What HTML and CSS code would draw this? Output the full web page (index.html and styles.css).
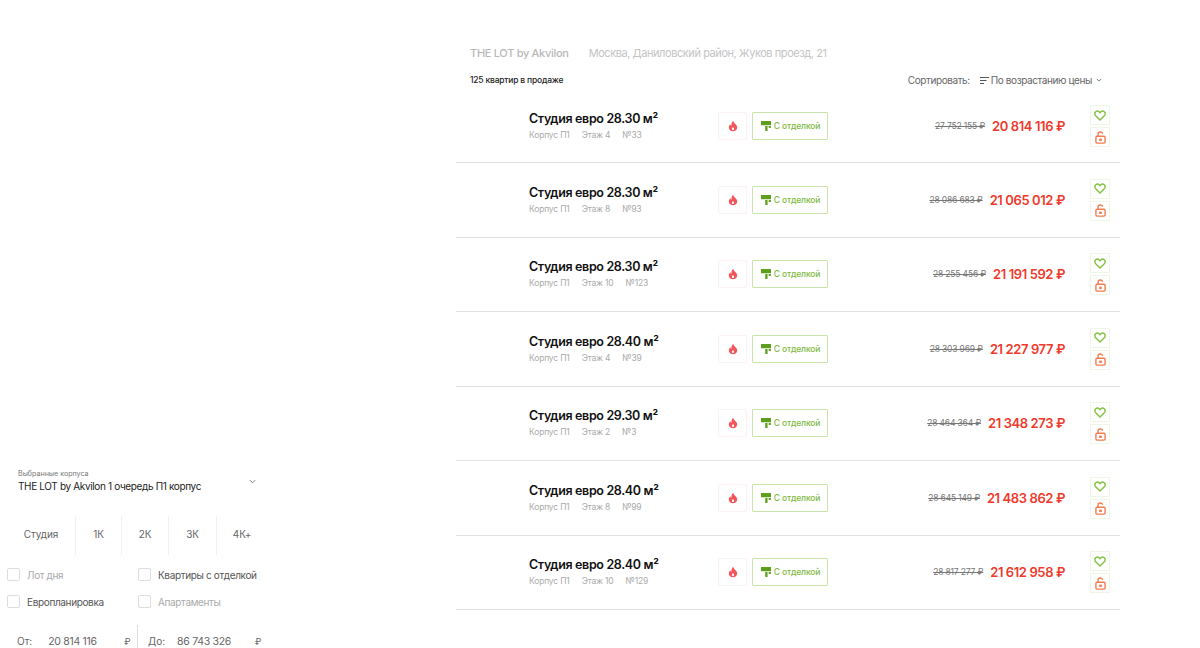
FILE: index.html
```html
<!DOCTYPE html>
<html lang="ru">
<head>
<meta charset="utf-8">
<title>THE LOT by Akvilon</title>
<link rel="stylesheet" href="styles.css">
</head>
<body>
<svg class="defs" width="0" height="0" aria-hidden="true">
  <symbol id="fire" viewBox="0 0 12 14"><path fill="#f4555a" fill-rule="evenodd" d="M6.3.6c.5 2.200 1.500 3 2.700 4.300C10.300 6.200 11 7.300 11 8.800 11 11.500 8.800 13.400 6 13.400S1 11.500 1 8.800c0-1.600.8-3 1.900-3.900.1 1 .5 1.700 1.200 2.100C3.900 4.400 4.600 2 6.300.6zM6 8.200c-.8.9-1.300 1.600-1.300 2.500 0 .8.600 1.300 1.300 1.300s1.300-.5 1.300-1.300C7.300 9.800 6.800 9.100 6 8.200z"/></symbol>
  <symbol id="roller" viewBox="0 0 13 13"><path fill="#5f9e1c" d="M0 0h13v5.500H0zM5.500 6.500h3V13h-3zM10 6.500h2.800v2.600H10z"/></symbol>
  <symbol id="heart" viewBox="0 0 14 13"><path fill="none" stroke="#83c341" stroke-width="1.700" stroke-linejoin="round" d="M7 11.800 1.900 6.700C.5 5.300.6 3.200 1.900 2c1.300-1.100 3.200-.9 4.300.3l.8.900.8-.9c1.100-1.200 3-1.400 4.300-.3 1.300 1.200 1.400 3.300 0 4.700z"/></symbol>
  <symbol id="lock" viewBox="0 0 12 14"><g fill="none" stroke="#f37b4d" stroke-width="1.500"><rect x="1" y="5.700" width="10" height="7.500" rx="1.200"/><path d="M3.300 5.700V3.300C3.300 1.900 4.500 1 5.800 1 7 1 8 1.700 8.400 2.800"/></g><rect fill="#f37b4d" x="4.600" y="8.200" width="2.800" height="2.600"/></symbol>
  <symbol id="chev" viewBox="0 0 8 5"><path fill="none" stroke="currentColor" stroke-width="1.100" d="M1 1l3 3 3-3"/></symbol>
</svg>
<main class="page">
  <aside class="filters">
    <div class="building">
      <div>
        <div class="building-label">Выбранные корпуса</div>
        <div class="building-value">THE LOT by Akvilon 1 очередь П1 корпус</div>
      </div>
      <svg class="building-chev"><use href="#chev"/></svg>
    </div>
    <div class="types">
      <div class="type type-studio">Студия</div>
      <div class="type type-1">1К</div>
      <div class="type type-2">2К</div>
      <div class="type type-3">3К</div>
      <div class="type type-4">4К+</div>
    </div>
    <div class="checks">
      <label class="check muted"><span class="box"></span>Лот дня</label>
      <label class="check"><span class="box"></span>Квартиры с отделкой</label>
      <label class="check"><span class="box"></span>Европланировка</label>
      <label class="check muted"><span class="box"></span>Апартаменты</label>
    </div>
    <div class="range">
      <div class="range-side range-from"><span>От:</span><span class="range-num">20 814 116</span><span class="range-cur">₽</span></div>
      <div class="range-side range-to"><span>До:</span><span class="range-num">86 743 326</span><span class="range-cur">₽</span></div>
    </div>
  </aside>
  <section class="list">
    <header class="heading">
      <span class="title">THE LOT by Akvilon</span>
      <span class="address">Москва, Даниловский район, Жуков проезд, 21</span>
    </header>
    <div class="toolbar">
      <span class="count">125 квартир в продаже</span>
      <div class="sort">
        <span>Сортировать:</span>
        <span class="sort-value">
          <svg class="sort-icon" viewBox="0 0 9 7"><path stroke="#555" stroke-width="1" d="M0 .5h9M0 3.500h6.500M0 6.500h4"/></svg>
          По возрастанию цены
          <svg class="sort-chev"><use href="#chev"/></svg>
        </span>
      </div>
    </div>
    <article class="row">
      <div class="info"><h3>Студия евро 28.30 м²</h3><p><span>Корпус П1</span><span>Этаж 4</span><span>№33</span></p></div>
      <div class="tag-fire"><svg class="i-fire"><use href="#fire"/></svg></div>
      <div class="tag-finish"><svg class="i-roller"><use href="#roller"/></svg>С отделкой</div>
      <div class="prices"><s>27 752 155 ₽</s><strong>20 814 116 ₽</strong></div>
      <div class="actions"><span class="act"><svg class="i-heart"><use href="#heart"/></svg></span><span class="act"><svg class="i-lock"><use href="#lock"/></svg></span></div>
    </article>
    <article class="row">
      <div class="info"><h3>Студия евро 28.30 м²</h3><p><span>Корпус П1</span><span>Этаж 8</span><span>№93</span></p></div>
      <div class="tag-fire"><svg class="i-fire"><use href="#fire"/></svg></div>
      <div class="tag-finish"><svg class="i-roller"><use href="#roller"/></svg>С отделкой</div>
      <div class="prices"><s>28 086 683 ₽</s><strong>21 065 012 ₽</strong></div>
      <div class="actions"><span class="act"><svg class="i-heart"><use href="#heart"/></svg></span><span class="act"><svg class="i-lock"><use href="#lock"/></svg></span></div>
    </article>
    <article class="row">
      <div class="info"><h3>Студия евро 28.30 м²</h3><p><span>Корпус П1</span><span>Этаж 10</span><span>№123</span></p></div>
      <div class="tag-fire"><svg class="i-fire"><use href="#fire"/></svg></div>
      <div class="tag-finish"><svg class="i-roller"><use href="#roller"/></svg>С отделкой</div>
      <div class="prices"><s>28 255 456 ₽</s><strong>21 191 592 ₽</strong></div>
      <div class="actions"><span class="act"><svg class="i-heart"><use href="#heart"/></svg></span><span class="act"><svg class="i-lock"><use href="#lock"/></svg></span></div>
    </article>
    <article class="row">
      <div class="info"><h3>Студия евро 28.40 м²</h3><p><span>Корпус П1</span><span>Этаж 4</span><span>№39</span></p></div>
      <div class="tag-fire"><svg class="i-fire"><use href="#fire"/></svg></div>
      <div class="tag-finish"><svg class="i-roller"><use href="#roller"/></svg>С отделкой</div>
      <div class="prices"><s>28 303 969 ₽</s><strong>21 227 977 ₽</strong></div>
      <div class="actions"><span class="act"><svg class="i-heart"><use href="#heart"/></svg></span><span class="act"><svg class="i-lock"><use href="#lock"/></svg></span></div>
    </article>
    <article class="row">
      <div class="info"><h3>Студия евро 29.30 м²</h3><p><span>Корпус П1</span><span>Этаж 2</span><span>№3</span></p></div>
      <div class="tag-fire"><svg class="i-fire"><use href="#fire"/></svg></div>
      <div class="tag-finish"><svg class="i-roller"><use href="#roller"/></svg>С отделкой</div>
      <div class="prices"><s>28 464 364 ₽</s><strong>21 348 273 ₽</strong></div>
      <div class="actions"><span class="act"><svg class="i-heart"><use href="#heart"/></svg></span><span class="act"><svg class="i-lock"><use href="#lock"/></svg></span></div>
    </article>
    <article class="row">
      <div class="info"><h3>Студия евро 28.40 м²</h3><p><span>Корпус П1</span><span>Этаж 8</span><span>№99</span></p></div>
      <div class="tag-fire"><svg class="i-fire"><use href="#fire"/></svg></div>
      <div class="tag-finish"><svg class="i-roller"><use href="#roller"/></svg>С отделкой</div>
      <div class="prices"><s>28 645 149 ₽</s><strong>21 483 862 ₽</strong></div>
      <div class="actions"><span class="act"><svg class="i-heart"><use href="#heart"/></svg></span><span class="act"><svg class="i-lock"><use href="#lock"/></svg></span></div>
    </article>
    <article class="row">
      <div class="info"><h3>Студия евро 28.40 м²</h3><p><span>Корпус П1</span><span>Этаж 10</span><span>№129</span></p></div>
      <div class="tag-fire"><svg class="i-fire"><use href="#fire"/></svg></div>
      <div class="tag-finish"><svg class="i-roller"><use href="#roller"/></svg>С отделкой</div>
      <div class="prices"><s>28 817 277 ₽</s><strong>21 612 958 ₽</strong></div>
      <div class="actions"><span class="act"><svg class="i-heart"><use href="#heart"/></svg></span><span class="act"><svg class="i-lock"><use href="#lock"/></svg></span></div>
    </article>
  </section>
</main>
</body>
</html>
```
FILE: styles.css
```css
* { box-sizing: border-box; }
html, body { margin: 0; height: 648px; overflow: hidden; background: #fff; }
body { font-family: Inter, "Noto Sans", sans-serif; color: #111; }
.defs { position: absolute; }
.page { display: flex; height: 648px; }

/* Filters */
.filters { width: 456px; flex: none; padding: 469px 0 0 7px; }
.building { width: 249px; margin-left: 11px; display: flex; justify-content: space-between; height: 30px; }
.building-label { font-size: 7.100px; line-height: 10px; color: #777; }
.building-value { font-size: 10px; letter-spacing: -.35px; line-height: 15px; color: #222; white-space: nowrap; }
.building-chev { width: 7px; height: 5px; color: #777; margin: 10px 11px 0 0; }
.types { display: flex; height: 39px; margin-top: 17px; font-size: 10px; letter-spacing: -.1px; line-height: 37px; color: #666; }
.type { text-align: center; border-left: 1px solid #f1f1f1; }
.type-studio { width: 68px; border-left: 0; }
.type-1 { width: 46px; }
.type-2 { width: 47px; }
.type-3 { width: 48px; }
.type-4 { width: 51px; }
.checks { display: grid; grid-template-columns: 131px 140px; row-gap: 14px; margin-top: 13px; }
.check { display: flex; align-items: center; gap: 7px; height: 13px; font-size: 10px; letter-spacing: -.35px; color: #555; white-space: nowrap; }
.check.muted { color: #aaa; }
.box { width: 13px; height: 13px; border: 1px solid #ddd; border-radius: 2px; flex: none; }
.range { display: flex; margin-top: 17px; height: 24px; font-size: 10px; color: #666; }
.range-side { display: flex; align-items: center; padding-top: 8px; }
.range-from { width: 131px; padding-left: 10px; border-right: 1px solid #ddd; }
.range-to { padding-left: 10px; }
.range-num { font-size: 10.500px; letter-spacing: -.3px; }
.range-from .range-num { margin-left: 16px; width: 76px; }
.range-cur { font-size: 9px; color: #666; }
.range-to .range-num { margin-left: 12px; width: 78px; }

/* List */
.list { width: 664px; flex: none; }
.heading { display: flex; gap: 20px; padding: 46px 0 0 14px; height: 72px; font-size: 11px; letter-spacing: -.43px; line-height: 14px; white-space: nowrap; }
.title { font-weight: 500; letter-spacing: -.3px; color: #b8b8b8; }
.address { color: #c4c4c4; }
.toolbar { display: flex; justify-content: space-between; align-items: center; height: 18px; padding: 0 18px 2px 14px; }
.count { font-size: 8.500px; letter-spacing: -.2px; font-weight: 500; color: #222; }
.sort { display: flex; gap: 10px; font-size: 10px; letter-spacing: -.4px; color: #666; white-space: nowrap; }
.sort-value { display: flex; align-items: center; }
.sort-icon { width: 9px; height: 7px; margin-right: 2px; }
.sort-chev { width: 6px; height: 4px; margin-left: 4px; color: #666; }
.row { position: relative; display: flex; align-items: center; height: 74.500px; border-bottom: 1px solid #e2e2e2; }
.row:first-of-type { height: 73px; }
.info { width: 262px; padding-left: 73px; flex: none; }
.info h3 { margin: 0; font-size: 12.500px; letter-spacing: -.35px; line-height: 16px; font-weight: 600; color: #111; white-space: nowrap; }
.info p { margin: 2px 0 0; display: flex; gap: 12px; font-size: 8.500px; letter-spacing: -.17px; line-height: 12px; color: #aaa; white-space: nowrap; }
.tag-fire { width: 29px; height: 28px; flex: none; display: flex; align-items: center; justify-content: center; border: 1px solid #fcf1ef; border-radius: 2px; }
.i-fire { width: 10px; height: 12px; }
.tag-finish { width: 76px; height: 28px; flex: none; margin-left: 5px; padding-left: 1px; display: flex; align-items: center; justify-content: center; gap: 3px; border: 1px solid #c9e5ab; border-radius: 1px; font-size: 8.500px; letter-spacing: -.13px; font-weight: 500; color: #80b93f; white-space: nowrap; }
.i-roller { width: 10px; height: 10px; }
.prices { width: 237px; flex: none; display: flex; align-items: center; justify-content: flex-end; gap: 7px; white-space: nowrap; }
.prices s { font-size: 8.500px; letter-spacing: -.17px; color: #777; text-decoration-thickness: .6px; }
.prices strong { font-size: 13px; letter-spacing: -.4px; font-weight: 600; color: #f0392b; }
.actions { display: flex; flex-direction: column; gap: 2px; margin-left: 25px; }
.act { width: 20px; height: 20px; display: flex; align-items: center; justify-content: center; border: 1px solid #eef6e6; }
.i-heart { width: 12px; height: 11px; }
.i-lock { width: 11px; height: 13px; }
```
